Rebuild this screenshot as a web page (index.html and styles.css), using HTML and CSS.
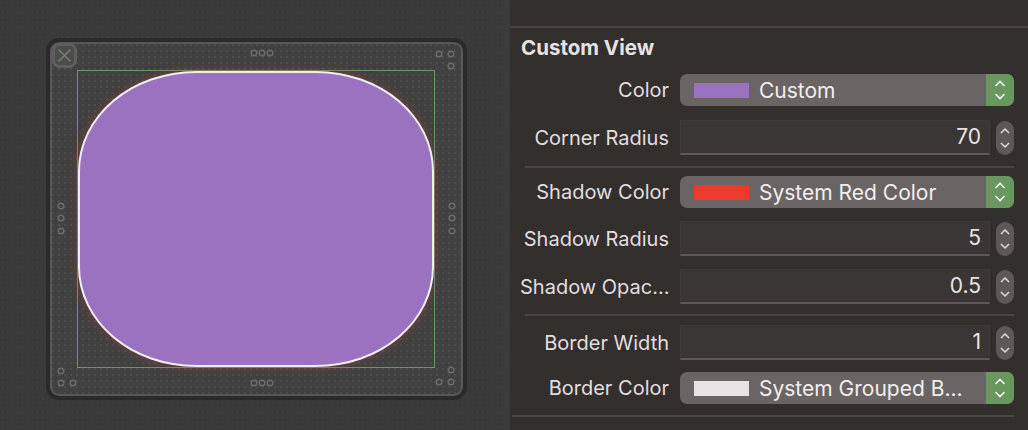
FILE: index.html
```html
<!DOCTYPE html>
<html>
<head>
<meta charset="utf-8">
<link rel="stylesheet" href="styles.css">
</head>
<body>
<div class="app">
  <div class="canvas-pane">
    <div class="frame">
      <div class="bounds"><div class="shape"></div></div>
      <svg class="overlay" width="421" height="362" viewBox="0 0 421 362">
        <g class="close">
          <rect x="7.5" y="6.5" width="22" height="22" rx="6" fill="#4c4c4c" stroke="#5e5e5e" stroke-width="3"/>
          <path d="M12.5 11.5 L24.5 23.5 M24.5 11.5 L12.5 23.5" stroke="#72806f" stroke-width="1.6" fill="none"/>
        </g>
        <g fill="none" stroke="#6c6c6c" stroke-width="1.4">
          <circle cx="208" cy="15" r="2.8"/><circle cx="216" cy="15" r="2.8"/><circle cx="224" cy="15" r="2.8"/>
          <circle cx="393" cy="16" r="2.8"/><circle cx="405" cy="16" r="2.8"/><circle cx="405" cy="28" r="2.8"/>
          <circle cx="15" cy="168" r="2.8"/><circle cx="15" cy="180" r="2.8"/><circle cx="15" cy="193" r="2.8"/>
          <circle cx="406" cy="168" r="2.8"/><circle cx="406" cy="180" r="2.8"/><circle cx="406" cy="193" r="2.8"/>
          <circle cx="15" cy="333" r="2.8"/><circle cx="15" cy="345" r="2.8"/><circle cx="27" cy="345" r="2.8"/>
          <circle cx="208" cy="345" r="2.8"/><circle cx="216" cy="345" r="2.8"/><circle cx="224" cy="345" r="2.8"/>
          <circle cx="405" cy="332" r="2.8"/><circle cx="393" cy="344" r="2.8"/><circle cx="405" cy="344" r="2.8"/>
        </g>
      </svg>
    </div>
  </div>
  <div class="inspector">
    <div class="header">Custom View</div>

    <div class="group g1">
      <div class="row">
        <div class="label">Color</div>
        <div class="popup">
          <span class="swatch swatch-purple"></span>
          <span class="popup-text">Custom</span>
          <span class="popup-arrows">
            <svg width="14" height="22" viewBox="0 0 14 22"><path d="M2.5 7 L7 2.5 L11.5 7 M2.5 15 L7 19.5 L11.5 15" fill="none" stroke="#f2f2f2" stroke-width="1.6"/></svg>
          </span>
        </div>
      </div>
      <div class="row">
        <div class="label">Corner Radius</div>
        <div class="field">70</div>
        <div class="stepper">
          <svg width="12" height="24" viewBox="0 0 12 24"><path d="M2 7 L6 3 L10 7 M2 17 L6 21 L10 17" fill="none" stroke="#dedada" stroke-width="1.5"/></svg>
        </div>
      </div>
    </div>
    <div class="sep"></div>

    <div class="group g2">
      <div class="row">
        <div class="label">Shadow Color</div>
        <div class="popup">
          <span class="swatch swatch-red"></span>
          <span class="popup-text">System Red Color</span>
          <span class="popup-arrows">
            <svg width="14" height="22" viewBox="0 0 14 22"><path d="M2.5 7 L7 2.5 L11.5 7 M2.5 15 L7 19.5 L11.5 15" fill="none" stroke="#f2f2f2" stroke-width="1.6"/></svg>
          </span>
        </div>
      </div>
      <div class="row">
        <div class="label">Shadow Radius</div>
        <div class="field">5</div>
        <div class="stepper">
          <svg width="12" height="24" viewBox="0 0 12 24"><path d="M2 7 L6 3 L10 7 M2 17 L6 21 L10 17" fill="none" stroke="#dedada" stroke-width="1.5"/></svg>
        </div>
      </div>
      <div class="row">
        <div class="label">Shadow Opac...</div>
        <div class="field">0.5</div>
        <div class="stepper">
          <svg width="12" height="24" viewBox="0 0 12 24"><path d="M2 7 L6 3 L10 7 M2 17 L6 21 L10 17" fill="none" stroke="#dedada" stroke-width="1.5"/></svg>
        </div>
      </div>
    </div>
    <div class="sep"></div>

    <div class="group g3">
      <div class="row">
        <div class="label">Border Width</div>
        <div class="field">1</div>
        <div class="stepper">
          <svg width="12" height="24" viewBox="0 0 12 24"><path d="M2 7 L6 3 L10 7 M2 17 L6 21 L10 17" fill="none" stroke="#dedada" stroke-width="1.5"/></svg>
        </div>
      </div>
      <div class="row">
        <div class="label">Border Color</div>
        <div class="popup">
          <span class="swatch swatch-white"></span>
          <span class="popup-text">System Grouped B...</span>
          <span class="popup-arrows">
            <svg width="14" height="22" viewBox="0 0 14 22"><path d="M2.5 7 L7 2.5 L11.5 7 M2.5 15 L7 19.5 L11.5 15" fill="none" stroke="#f2f2f2" stroke-width="1.6"/></svg>
          </span>
        </div>
      </div>
    </div>
    <div class="sep sep-last"></div>
  </div>
</div>
</body>
</html>
```
FILE: styles.css
```css
html, body {
  margin: 0;
  padding: 0;
}
body {
  width: 1028px;
  height: 430px;
  overflow: hidden;
  background: #3a3a3a;
  font-family: Inter, "Liberation Sans", sans-serif;
}
.app {
  display: flex;
  width: 1028px;
  height: 430px;
}
.canvas-pane {
  width: 510px;
  flex: none;
  padding: 38px 0 0 46px;
  box-sizing: border-box;
  background-color: #3a3a3a;
  background-image: radial-gradient(circle, rgba(100,100,100,0.25) 0.6px, transparent 0.9px);
  background-size: 5px 5px;
}
.frame {
  position: relative;
  width: 421px;
  height: 362px;
  box-sizing: border-box;
  border: 4px solid #2b2a2a;
  border-radius: 13px;
  padding: 28px 28px 28px 27px;
  background-color: #414141;
  background-image: radial-gradient(circle, rgba(120,120,120,0.35) 0.6px, transparent 0.9px);
  background-size: 6px 6px;
  box-shadow: inset 0 0 0 2px #585858;
}
.bounds {
  width: 358px;
  height: 298px;
  box-sizing: border-box;
  border: 1px solid #6c946b;
}
.shape {
  width: 100%;
  height: 100%;
  box-sizing: border-box;
  background: #9b72c0;
  border: 2px solid #eeeeee;
  border-radius: 118px / 100px;
  box-shadow: 0 0 8px 2px rgba(190, 60, 55, 0.3);
}
.overlay {
  position: absolute;
  left: -4px;
  top: -4px;
}
.inspector {
  flex: 1;
  background: #332f2d;
  padding-top: 26px;
  box-sizing: border-box;
}
.header {
  border-top: 2px solid #484342;
  height: 46px;
  box-sizing: border-box;
  padding: 7px 0 0 11px;
  font-weight: 700;
  font-size: 20.5px;
  color: #e6e1e4;
}
.group {
  display: flex;
  flex-direction: column;
  gap: 14px;
  margin: 0 14px 0 10px;
}
.sep {
  height: 2px;
  background: #4a4544;
  margin: 0 14px 0 15px;
}
.sep-last {
  margin-left: 2px;
}
.g1 { padding: 2px 0 11px 0; }
.g2 { padding: 8px 0 10px 0; gap: 13px; }
.g3 { padding: 9px 0 11px 0; gap: 12px; }
.row {
  display: flex;
  align-items: center;
}
.label {
  width: 149px;
  flex: none;
  text-align: right;
  font-size: 20px;
  color: #e2dde0;
  margin-right: 11px;
  white-space: nowrap;
}
.popup {
  flex: 1;
  height: 32px;
  display: flex;
  align-items: center;
  background: #6a6564;
  border-radius: 7px;
  overflow: hidden;
}
.swatch {
  width: 55px;
  height: 15px;
  margin-left: 14px;
  margin-right: 10px;
  flex: none;
}
.swatch-purple { background: #9b72c0; }
.swatch-red { background: #ec3a2f; }
.swatch-white { background: #e8e4e6; }
.popup-text {
  flex: 1;
  font-size: 21px;
  color: #f2eeee;
  white-space: nowrap;
}
.popup-arrows {
  width: 28px;
  height: 100%;
  background: #68985d;
  display: flex;
  align-items: center;
  justify-content: center;
}
.field {
  flex: 1;
  height: 35px;
  box-sizing: border-box;
  background: #3a3635;
  border: 1px solid #3f3b3a;
  border-bottom: 2px solid #5e5958;
  text-align: right;
  padding-right: 8px;
  font-size: 21px;
  line-height: 32px;
  color: #e8e4e4;
}
.stepper {
  width: 18px;
  height: 34px;
  margin-left: 6px;
  border-radius: 9px;
  background: #5e5958;
  display: flex;
  align-items: center;
  justify-content: center;
  flex: none;
}
```
